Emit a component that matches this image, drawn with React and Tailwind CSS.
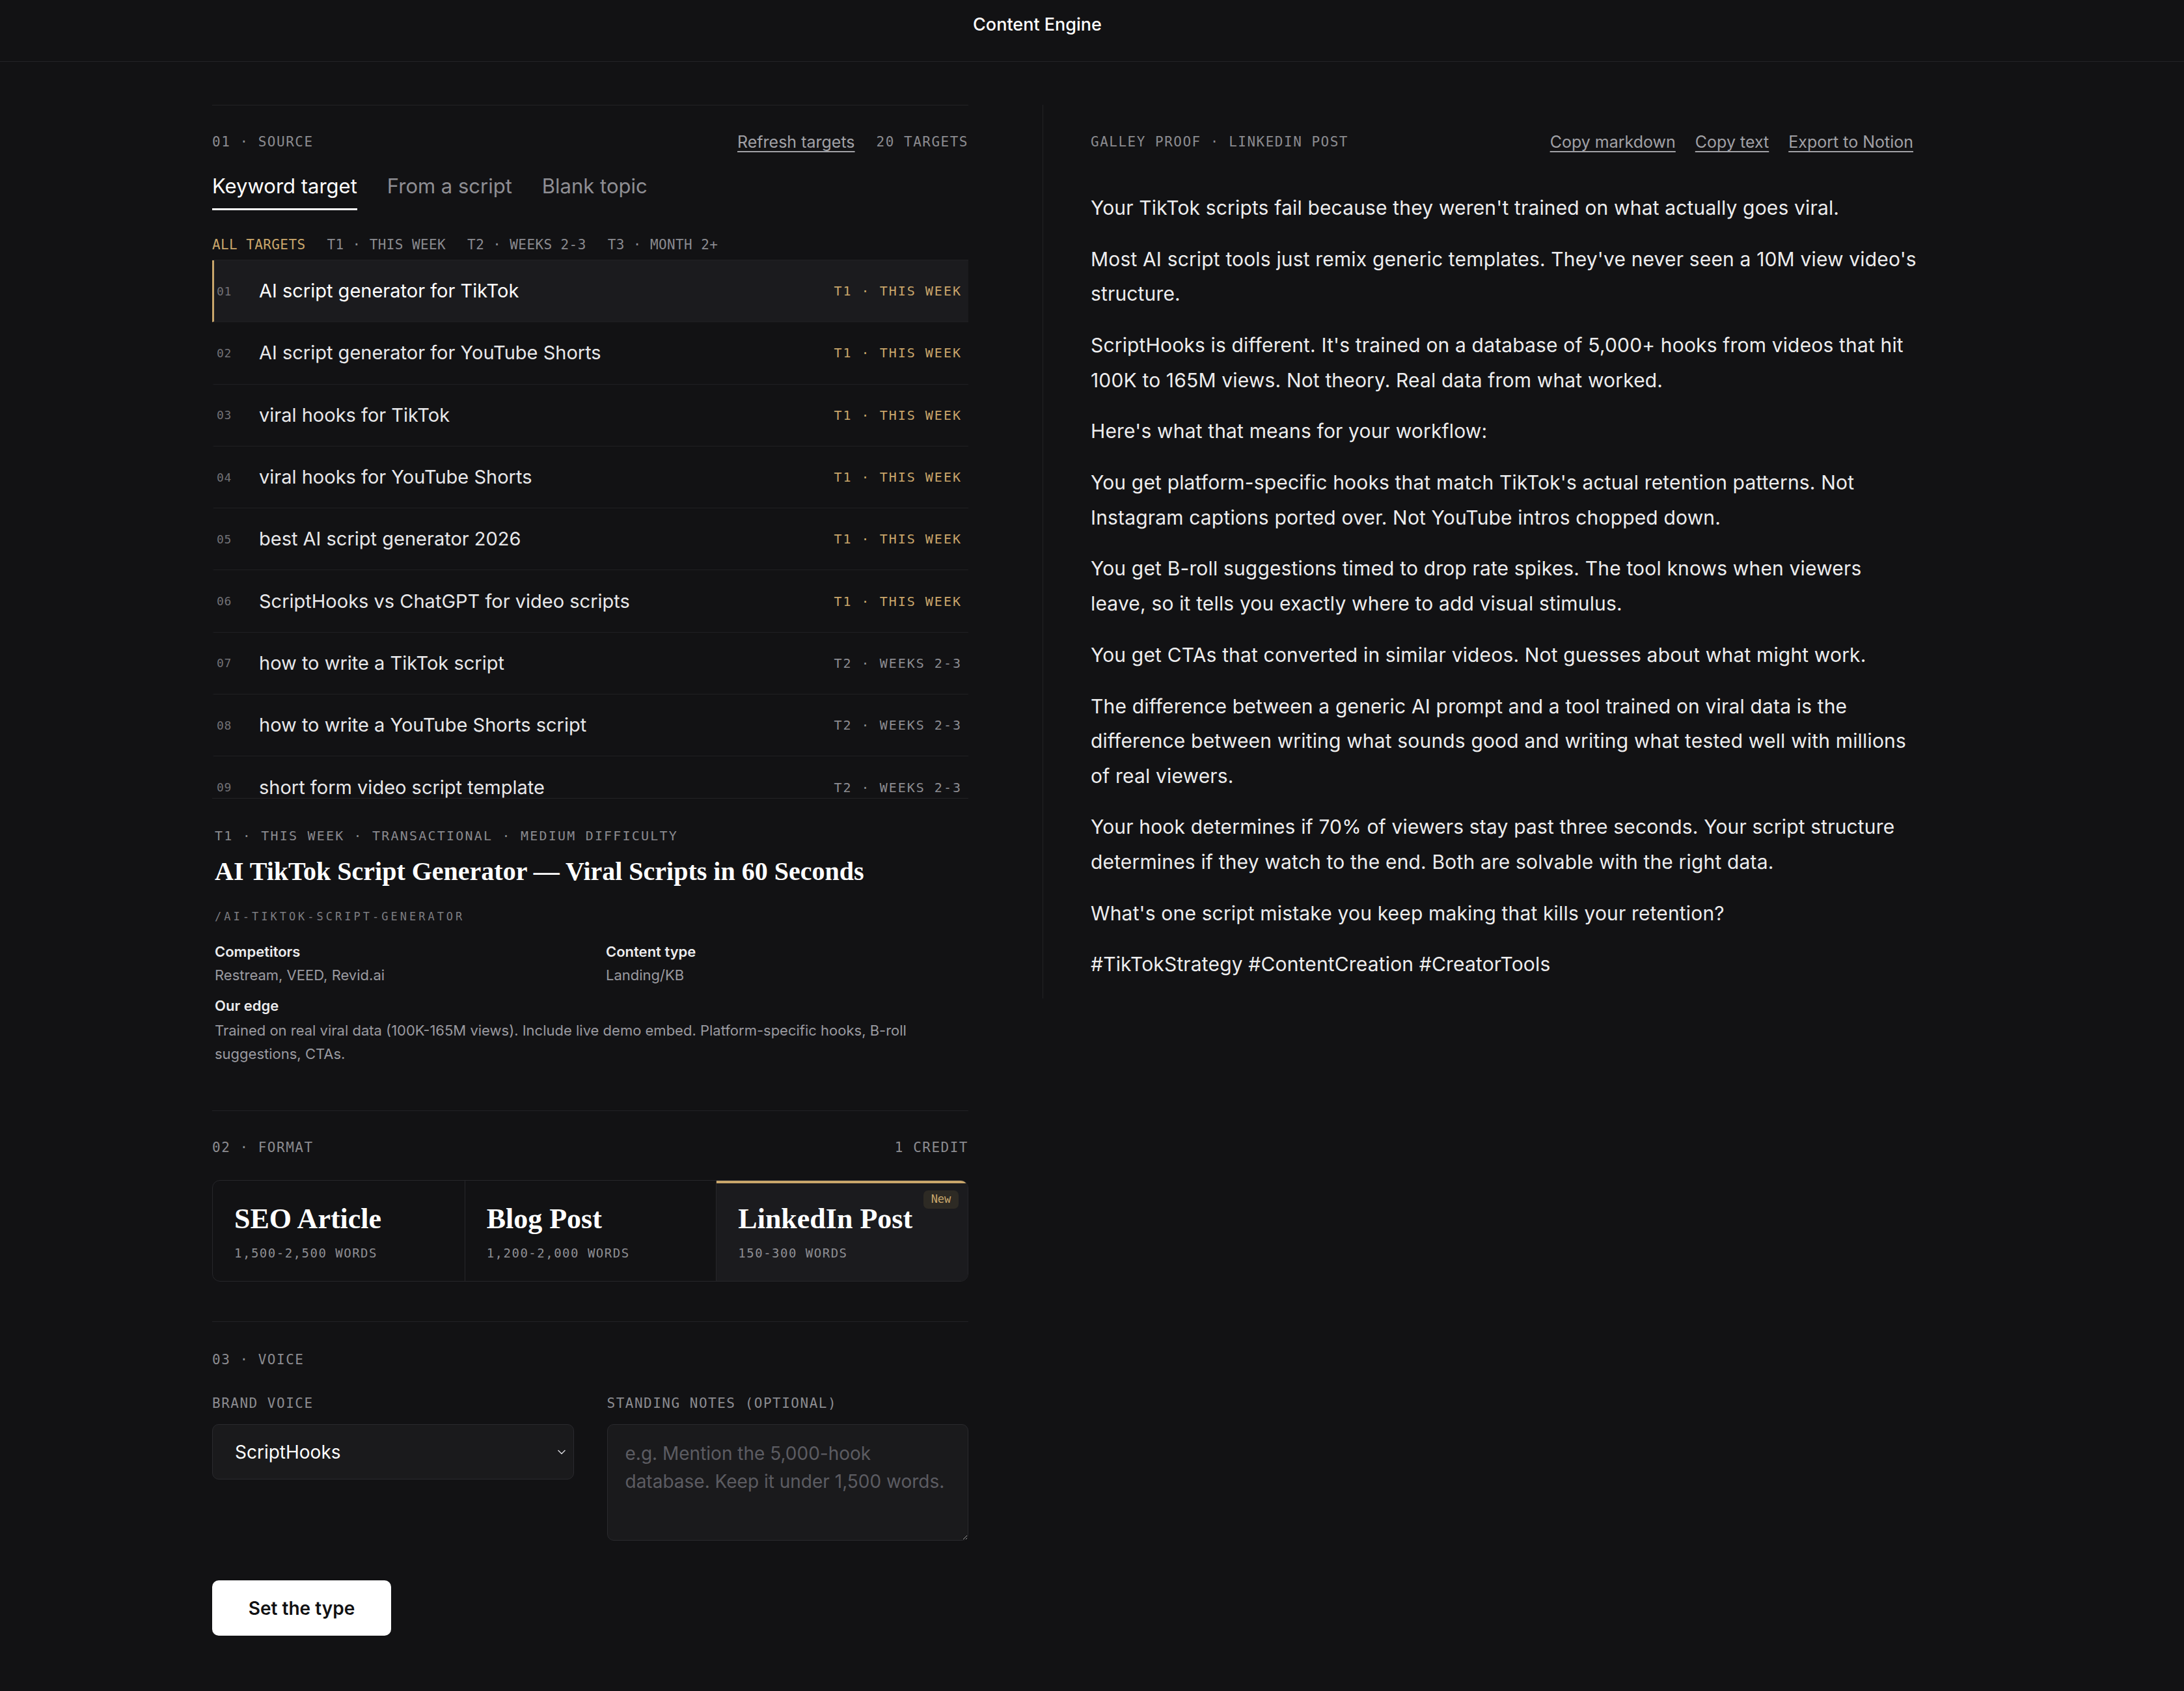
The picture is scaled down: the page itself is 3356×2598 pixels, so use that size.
import React from "react";

const MONO = "[font-family:'DejaVu_Sans_Mono',monospace]";
const SERIF = "[font-family:'Liberation_Serif',serif]";

const rows = [
  ["01", "AI script generator for TikTok", "T1 · THIS WEEK", true],
  ["02", "AI script generator for YouTube Shorts", "T1 · THIS WEEK", true],
  ["03", "viral hooks for TikTok", "T1 · THIS WEEK", true],
  ["04", "viral hooks for YouTube Shorts", "T1 · THIS WEEK", true],
  ["05", "best AI script generator 2026", "T1 · THIS WEEK", true],
  ["06", "ScriptHooks vs ChatGPT for video scripts", "T1 · THIS WEEK", true],
  ["07", "how to write a TikTok script", "T2 · WEEKS 2-3", false],
  ["08", "how to write a YouTube Shorts script", "T2 · WEEKS 2-3", false],
  ["09", "short form video script template", "T2 · WEEKS 2-3", false],
];

const paragraphs = [
  "Your TikTok scripts fail because they weren't trained on what actually goes viral.",
  "Most AI script tools just remix generic templates. They've never seen a 10M view video's structure.",
  "ScriptHooks is different. It's trained on a database of 5,000+ hooks from videos that hit 100K to 165M views. Not theory. Real data from what worked.",
  "Here's what that means for your workflow:",
  "You get platform-specific hooks that match TikTok's actual retention patterns. Not Instagram captions ported over. Not YouTube intros chopped down.",
  "You get B-roll suggestions timed to drop rate spikes. The tool knows when viewers leave, so it tells you exactly where to add visual stimulus.",
  "You get CTAs that converted in similar videos. Not guesses about what might work.",
  "The difference between a generic AI prompt and a tool trained on viral data is the difference between writing what sounds good and writing what tested well with millions of real viewers.",
  "Your hook determines if 70% of viewers stay past three seconds. Your script structure determines if they watch to the end. Both are solvable with the right data.",
  "What's one script mistake you keep making that kills your retention?",
  "#TikTokStrategy #ContentCreation #CreatorTools",
];

function SectionLabel({ children }) {
  return (
    <span className={`${MONO} text-[21px] leading-[32px] tracking-[1.5px] text-[#8b8b90]`}>
      {children}
    </span>
  );
}

export default function App() {
  return (
    <div className="min-h-screen bg-[#121214] text-[#ededee] [font-family:Inter,sans-serif]">
      <header className="h-[95px] border-b border-[#232326] flex justify-center pt-[20px] pr-[168px]">
        <span className="text-[27px] leading-[36px] font-medium text-white">Content Engine</span>
      </header>

      <main className="flex items-start pl-[326px] pt-[66px] pb-[90px]">
        {/* LEFT COLUMN */}
        <div className="w-[1162px] shrink-0">
          {/* 01 SOURCE */}
          <section className="border-t border-[#222225] pt-[40px] pb-[69px]">
            <div className="flex items-center justify-between h-[32px]">
              <SectionLabel>01 · SOURCE</SectionLabel>
              <div className="flex items-center gap-[33px]">
                <span className="text-[25px] leading-[32px] text-[#a1a1a6] underline underline-offset-[5px] decoration-[2px]">
                  Refresh targets
                </span>
                <SectionLabel>20 TARGETS</SectionLabel>
              </div>
            </div>

            <div className="mt-[32px] flex gap-[46px]">
              <span className="text-[31px] leading-[40px] pb-[14px] border-b-[3px] border-white text-white">
                Keyword target
              </span>
              <span className="text-[31px] leading-[40px] pb-[14px] border-b-[3px] border-transparent text-[#8e8e93]">
                From a script
              </span>
              <span className="text-[31px] leading-[40px] pb-[14px] border-b-[3px] border-transparent text-[#8e8e93]">
                Blank topic
              </span>
            </div>

            <div className={`${MONO} mt-[40px] h-[28px] flex items-center gap-[33px] text-[21px] tracking-[0.4px] text-[#8a8a8f]`}>
              <span className="text-[#c9a66b]">ALL TARGETS</span>
              <span>T1 · THIS WEEK</span>
              <span>T2 · WEEKS 2-3</span>
              <span>T3 · MONTH 2+</span>
            </div>

            <div className="mt-[8px] h-[828px] overflow-hidden border-y border-[#222225]">
              {rows.map(([n, title, tier, t1], i) => (
                <div
                  key={n}
                  className={`h-[95.3px] flex items-center border-b border-[#1f1f22] border-l-[3px] pl-[4px] pr-[10px] ${
                    i === 0 ? "bg-[#1b1b1e] border-l-[#c9a66b]" : "border-l-transparent"
                  }`}
                >
                  <span className={`${MONO} w-[65px] text-[18px] tracking-[0.6px] text-[#717176]`}>{n}</span>
                  <span className={`flex-1 text-[29px] leading-[36px] ${i === 0 ? "text-white" : "text-[#e8e8ea]"}`}>
                    {title}
                  </span>
                  <span
                    className={`${MONO} text-[20px] tracking-[2px] ${t1 ? "text-[#caa66b]" : "text-[#8c8c91]"}`}
                  >
                    {tier}
                  </span>
                </div>
              ))}
            </div>

            <div className="px-[4px]">
              <div className={`${MONO} mt-[43px] text-[20px] leading-[28px] tracking-[2.2px] text-[#8a8a8f]`}>
                T1 · THIS WEEK · TRANSACTIONAL · MEDIUM DIFFICULTY
              </div>
              <h2 className={`${SERIF} mt-[15px] text-[40px] leading-[52px] font-bold text-white`}>
                AI TikTok Script Generator — Viral Scripts in 60 Seconds
              </h2>
              <div className={`${MONO} mt-[30px] text-[17px] leading-[26px] tracking-[4px] text-[#7d7d82]`}>
                /AI-TIKTOK-SCRIPT-GENERATOR
              </div>
              <div className="mt-[25px] grid grid-cols-2 gap-x-[48px]">
                <div>
                  <div className="text-[22px] leading-[32px] font-semibold text-[#ececee]">Competitors</div>
                  <div className="mt-[4px] text-[22px] leading-[32px] text-[#9a9aa0]">Restream, VEED, Revid.ai</div>
                </div>
                <div>
                  <div className="text-[22px] leading-[32px] font-semibold text-[#ececee]">Content type</div>
                  <div className="mt-[4px] text-[22px] leading-[32px] text-[#9a9aa0]">Landing/KB</div>
                </div>
              </div>
              <div className="mt-[15px] text-[22px] leading-[32px] font-semibold text-[#ececee]">Our edge</div>
              <p className="mt-[4px] text-[22px] leading-[36px] text-[#9a9aa0]">
                Trained on real viral data (100K-165M views). Include live demo embed. Platform-specific hooks, B-roll
                suggestions, CTAs.
              </p>
            </div>
          </section>

          {/* 02 FORMAT */}
          <section className="border-t border-[#222225] pt-[40px] pb-[61px]">
            <div className="flex items-center justify-between h-[32px]">
              <SectionLabel>02 · FORMAT</SectionLabel>
              <SectionLabel>1 CREDIT</SectionLabel>
            </div>
            <div className="mt-[34px] h-[156px] grid grid-cols-3 border border-[#26262a] rounded-[12px] overflow-hidden">
              <div className="px-[33px] pt-[33px]">
                <div className={`${SERIF} text-[44px] leading-[52px] font-bold text-white`}>SEO Article</div>
                <div className={`${MONO} mt-[12px] text-[19px] leading-[28px] tracking-[1.5px] text-[#8e8e93]`}>
                  1,500-2,500 WORDS
                </div>
              </div>
              <div className="px-[33px] pt-[33px] border-l border-[#26262a]">
                <div className={`${SERIF} text-[44px] leading-[52px] font-bold text-white`}>Blog Post</div>
                <div className={`${MONO} mt-[12px] text-[19px] leading-[28px] tracking-[1.5px] text-[#8e8e93]`}>
                  1,200-2,000 WORDS
                </div>
              </div>
              <div className="relative px-[33px] pt-[33px] border-l border-[#26262a] bg-[#1b1b1e] shadow-[inset_0_4px_0_#c9a66b]">
                <span
                  className={`${MONO} absolute top-[15px] right-[14px] w-[54px] h-[28px] flex items-center justify-center rounded-[7px] bg-[#2d2a24] text-[17px] text-[#c9a66b]`}
                >
                  New
                </span>
                <div className={`${SERIF} text-[44px] leading-[52px] font-bold text-white`}>LinkedIn Post</div>
                <div className={`${MONO} mt-[12px] text-[19px] leading-[28px] tracking-[1.5px] text-[#8e8e93]`}>
                  150-300 WORDS
                </div>
              </div>
            </div>
          </section>

          {/* 03 VOICE */}
          <section className="border-t border-[#222225] pt-[42px]">
            <div className="flex items-center h-[32px]">
              <SectionLabel>03 · VOICE</SectionLabel>
            </div>
            <div className="mt-[37px] grid grid-cols-2 gap-x-[51px]">
              <div>
                <div className={`${MONO} text-[21px] leading-[28px] tracking-[1.5px] text-[#8b8b90]`}>BRAND VOICE</div>
                <div className="mt-[18px] h-[85px] flex items-center justify-between pl-[34px] pr-[12px] rounded-[10px] border border-[#2a2a2e] bg-[#1a1a1c]">
                  <span className="text-[28px] text-white">ScriptHooks</span>
                  <svg width="12" height="8" viewBox="0 0 12 8" fill="none">
                    <path d="M1 1.5l5 5 5-5" stroke="#d4d4d8" strokeWidth="1.5" strokeLinecap="round" strokeLinejoin="round" />
                  </svg>
                </div>
              </div>
              <div>
                <div className={`${MONO} text-[21px] leading-[28px] tracking-[1.5px] text-[#8b8b90]`}>
                  STANDING NOTES (OPTIONAL)
                </div>
                <textarea
                  className="mt-[18px] block w-full h-[179px] pl-[27px] pr-[20px] pt-[23px] rounded-[10px] border border-[#2a2a2e] bg-[#1a1a1c] text-[28px] leading-[43px] text-white placeholder:text-[#5c5c62] outline-none"
                  placeholder="e.g. Mention the 5,000-hook database. Keep it under 1,500 words."
                />
              </div>
            </div>
            <button className="mt-[61px] w-[275px] h-[85px] rounded-[10px] bg-white text-[#111113] text-[28px] font-semibold">
              Set the type
            </button>
          </section>
        </div>

        {/* RIGHT COLUMN */}
        <aside className="ml-[114px] border-l border-[#222225] pl-[73px] pt-[41px]">
          <div className="w-[1272px]">
            <div className="w-[1264px] flex items-center justify-between h-[32px]">
              <SectionLabel>GALLEY PROOF · LINKEDIN POST</SectionLabel>
              <div className="flex items-center gap-[30px] text-[25px] leading-[32px] text-[#a1a1a6]">
                <span className="underline underline-offset-[5px] decoration-[2px]">Copy markdown</span>
                <span className="underline underline-offset-[5px] decoration-[2px]">Copy text</span>
                <span className="underline underline-offset-[5px] decoration-[2px]">Export to Notion</span>
              </div>
            </div>
            <div className="mt-[59px]">
              {paragraphs.map((p, i) => (
                <p key={i} className="text-[30px] leading-[53.5px] tracking-[0.16px] mb-[25.3px] text-[#ededee]">
                  {p}
                </p>
              ))}
            </div>
          </div>
        </aside>
      </main>
    </div>
  );
}
